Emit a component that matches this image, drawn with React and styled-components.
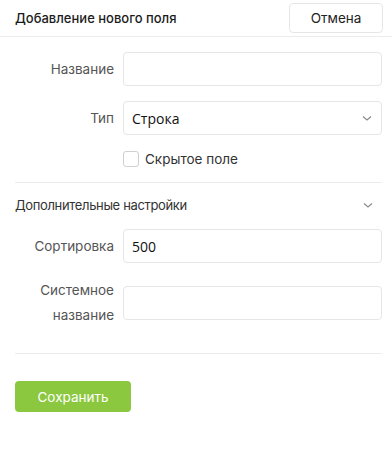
import styled, { createGlobalStyle } from "styled-components";

const GlobalStyle = createGlobalStyle`
  body {
    margin: 0;
    background: #fff;
    font-family: Inter, "Noto Sans", sans-serif;
    color: #222;
  }
`;

const Chevron = ({ size = 12 }) => (
  <svg width={size} height={size} viewBox="0 0 12 12" fill="none">
    <path d="M2 4.5 L6 8 L10 4.5" stroke="#888" strokeWidth="1.1" />
  </svg>
);

export default function App() {
  return (
    <>
      <GlobalStyle />
      <Panel>
        <Header>
          <Title>Добавление нового поля</Title>
          <CancelButton>Отмена</CancelButton>
        </Header>
        <Body>
          <Row>
            <Label>Название</Label>
            <Input />
          </Row>
          <Row>
            <Label>Тип</Label>
            <Select>
              <span>Строка</span>
              <Chevron />
            </Select>
          </Row>
          <CheckRow>
            <Box />
            <CheckText>Скрытое поле</CheckText>
          </CheckRow>
          <Divider />
          <Section>
            <SectionTitle>Дополнительные настройки</SectionTitle>
            <Chevron />
          </Section>
          <Row>
            <Label>Сортировка</Label>
            <Input value="500" readOnly />
          </Row>
          <Row $tall>
            <Label $multi>
              Системное
              <br />
              название
            </Label>
            <Input />
          </Row>
          <Divider $bottom />
          <SaveButton>Сохранить</SaveButton>
        </Body>
      </Panel>
    </>
  );
}

const Panel = styled.div`
  width: 392px;
`;

const Header = styled.div`
  height: 37px;
  box-sizing: border-box;
  border-bottom: 1px solid #ececec;
  display: flex;
  align-items: flex-start;
  justify-content: space-between;
  padding: 3px 9px 0 15px;
`;

const Title = styled.div`
  font-size: 13px;
  font-weight: 500;
  line-height: 30px;
  color: #1c1c1c;
`;

const CancelButton = styled.button`
  width: 94px;
  height: 30px;
  border: 1px solid #e6e6e6;
  border-radius: 4px;
  background: #fff;
  font-family: Inter, sans-serif;
  font-size: 13.5px;
  font-weight: 400;
  color: #222;
`;

const Body = styled.div`
  padding: 15px 10px 0 15px;
  display: flex;
  flex-direction: column;
`;

const Row = styled.div`
  display: flex;
  align-items: center;
  gap: 9px;
  margin-bottom: ${(p) => (p.$tall ? 0 : 15)}px;
`;

const Label = styled.div`
  width: 99px;
  flex: none;
  text-align: right;
  font-size: 13.5px;
  font-weight: 400;
  color: #555;
  line-height: ${(p) => (p.$multi ? 25 : 20)}px;
`;

const Input = styled.input`
  flex: 1;
  min-width: 0;
  height: 34px;
  box-sizing: border-box;
  border: 1px solid #e6e6e6;
  border-radius: 4px;
  padding: 0 8px;
  font-family: "Open Sans", sans-serif;
  font-size: 14px;
  color: #111;
  outline: none;
`;

const Select = styled.div`
  flex: 1;
  height: 34px;
  box-sizing: border-box;
  border: 1px solid #e6e6e6;
  border-radius: 4px;
  padding: 0 8px;
  display: flex;
  align-items: center;
  justify-content: space-between;
  font-family: "Open Sans", sans-serif;
  font-size: 14px;
  color: #111;
`;

const CheckRow = styled.div`
  display: flex;
  align-items: center;
  gap: 6px;
  margin-left: 108px;
  height: 17px;
`;

const Box = styled.span`
  width: 14px;
  height: 14px;
  border: 1px solid #d0d0d0;
  border-radius: 3px;
`;

const CheckText = styled.span`
  font-size: 13.5px;
  font-weight: 400;
  color: #333;
`;

const Divider = styled.div`
  height: 1px;
  background: #ececec;
  margin-top: ${(p) => (p.$bottom ? 25 : 15)}px;
`;

const Section = styled.div`
  display: flex;
  align-items: center;
  justify-content: space-between;
  padding-right: 8px;
  height: 20px;
  margin: 12px 0 14px;
`;

const SectionTitle = styled.div`
  font-size: 13px;
  font-weight: 400;
  letter-spacing: -0.35px;
  color: #333;
`;

const SaveButton = styled.button`
  align-self: flex-start;
  margin-top: 27px;
  width: 116px;
  height: 31px;
  border: none;
  border-radius: 4px;
  background: #8bc840;
  color: #fff;
  font-family: Inter, sans-serif;
  font-size: 13.5px;
  font-weight: 400;
`;
